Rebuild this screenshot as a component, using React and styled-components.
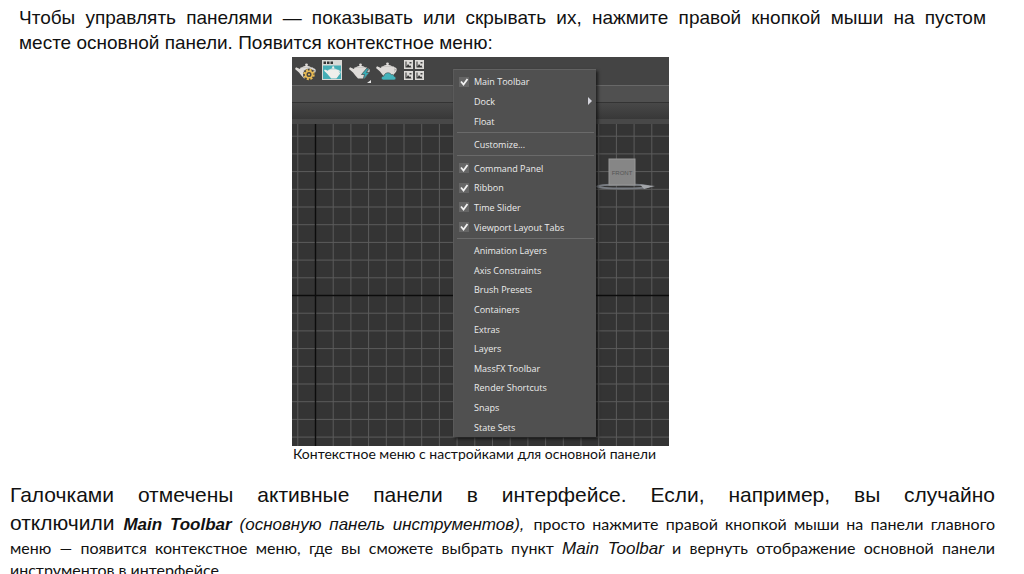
import React from "react";
import styled, { createGlobalStyle } from "styled-components";

const menuGroups = [
  [
    { label: "Main Toolbar", checked: true },
    { label: "Dock", submenu: true },
    { label: "Float" },
  ],
  [{ label: "Customize..." }],
  [
    { label: "Command Panel", checked: true },
    { label: "Ribbon", checked: true },
    { label: "Time Slider", checked: true },
    { label: "Viewport Layout Tabs", checked: true },
  ],
  [
    { label: "Animation Layers" },
    { label: "Axis Constraints" },
    { label: "Brush Presets" },
    { label: "Containers" },
    { label: "Extras" },
    { label: "Layers" },
    { label: "MassFX Toolbar" },
    { label: "Render Shortcuts" },
    { label: "Snaps" },
    { label: "State Sets" },
  ],
];

const Teapot = ({ fill = "#dedbd8" }) => (
  <g fill={fill}>
    <circle cx="11.500" cy="1.800" r="1.400" />
    <path d="M6 4.800Q11.500 .8 17 4.800z" />
    <path d="M5.500 4.600h12.500c1.800 4 .8 8-2.500 10.900H9C7 13.500 5.600 11.500 4 9.600L0 6 1 4.300l4 1.700z" />
    <path d="M17.500 6c3.500-.5 3.500 3.500-.5 6" fill="none" stroke={fill} strokeWidth="1.300" />
  </g>
);

const RenderSetupIcon = () => (
  <svg width="23" height="24" viewBox="0 0 23 24">
    <g transform="translate(0 3)">
      <Teapot />
    </g>
    <circle cx="14" cy="14.500" r="6" fill="#444" />
    <circle
      cx="14"
      cy="14.500"
      r="4.600"
      fill="none"
      stroke="#e8bb55"
      strokeWidth="2.200"
      strokeDasharray="2 1.610"
    />
    <circle cx="14" cy="14.500" r="3.300" fill="none" stroke="#e8bb55" strokeWidth="1.600" />
    <circle cx="14" cy="14.500" r="1.100" fill="#e8bb55" />
  </svg>
);

const RenderWindowIcon = () => (
  <svg width="23" height="24" viewBox="0 0 23 24">
    <rect x="0" y="0" width="20" height="20" fill="#d9d9d6" />
    <path d="M1.500 1.500h2.500v2.500H1.500zM5 1.500h2.500v2.500H5zM8.500 1.500H11v2.500H8.500z" fill="#333" />
    <rect x="1" y="5.500" width="18" height="13.500" fill="#45adb5" />
    <g transform="translate(2 6) scale(.8)">
      <Teapot fill="#f0efec" />
    </g>
  </svg>
);

const RenderIcon = () => (
  <svg width="23" height="24" viewBox="0 0 23 24">
    <g transform="translate(0 3)">
      <Teapot />
    </g>
    <path d="M18 8l-5.500 6.500h3L14 20l6.500-7.500h-3L19.500 9z" fill="#37abb4" stroke="#444" strokeWidth=".7" />
    <path d="M22 20v3h-4z" fill="#e5e5e5" />
  </svg>
);

const RenderCloudIcon = () => (
  <svg width="23" height="24" viewBox="0 0 23 24">
    <g transform="translate(0 2)">
      <Teapot />
    </g>
    <path
      d="M7.500 20c-3-.2-2.600-4 .5-4 .5-3.500 5.500-4.500 7.500-1.200 1.500-.6 2.400 0 2.500 1.500 2.500.3 2.500 3.700 0 3.700z"
      fill="#43b3bb"
      stroke="#444"
      strokeWidth=".6"
    />
  </svg>
);

const GalleryIcon = () => (
  <svg width="23" height="24" viewBox="0 0 23 24">
    {[
      [1, 0],
      [12, 0],
      [1, 11],
      [12, 11],
    ].map(([x, y]) => (
      <g key={`${x}-${y}`} transform={`translate(${x} ${y})`}>
        <rect width="9" height="9" fill="#dcdad7" />
        <path d="M1.500 1.500h1v6h-1zM2 7.500l2-3.500 1.500 2 .8-.8L7.500 7.500z" fill="#333" />
        <path d="M5.500 2h2v1.500h-2z" fill="#444" />
      </g>
    ))}
  </svg>
);

const tools = [
  { name: "Render Setup", Icon: RenderSetupIcon },
  { name: "Rendered Frame Window", Icon: RenderWindowIcon },
  { name: "Render Production", Icon: RenderIcon },
  { name: "Render in the Cloud", Icon: RenderCloudIcon },
  { name: "Render Gallery", Icon: GalleryIcon },
];

// grid step of the viewport; the world axes cross at 23 / 171
const STEP = 17.7;
const columns = Array.from({ length: 22 }, (_, i) => i - 1);
const rows = Array.from({ length: 18 }, (_, i) => i - 9);

const Viewport = () => (
  <ViewportSvg viewBox="0 0 377 322" aria-label="Viewport">
    <rect width="377" height="322" fill="#343434" />
    <g stroke="#5c5c5c" strokeWidth="1">
      {columns.map((i) => (
        <line key={i} x1={23.5 + i * STEP} x2={23.5 + i * STEP} y1="0" y2="322" />
      ))}
      {rows.map((i) => (
        <line key={i} y1={171.5 + i * STEP} y2={171.5 + i * STEP} x1="0" x2="377" />
      ))}
    </g>
    <path d="M23.500 0V322M0 171.500H377" stroke="#0c0c0c" strokeWidth="1.400" />
    <ellipse cx="331" cy="62.500" rx="26" ry="2" fill="none" stroke="#777b81" strokeWidth="1.800" />
    <path d="M348 60.500l15 1.500-11 3z" fill="#a4a6aa" />
    <rect x="317" y="35" width="26" height="26" fill="#868686" stroke="#989898" />
    <text
      x="330"
      y="51"
      fontSize="6"
      fontFamily="Liberation Sans, sans-serif"
      textAnchor="middle"
      fill="#555"
    >
      FRONT
    </text>
  </ViewportSvg>
);

const MenuItem = ({ item }) => {
  if (item.checked) {
    return (
      <CheckLabel>
        <Check type="checkbox" defaultChecked />
        {item.label}
      </CheckLabel>
    );
  }
  return (
    <MenuButton type="button">
      {item.label}
      {item.submenu && (
        <Arrow width="4" height="8" viewBox="0 0 4 8">
          <path d="M0 0l4 4-4 4z" fill="#d4d4dc" />
        </Arrow>
      )}
    </MenuButton>
  );
};

const App = () => {
  return (
    <Page>
      <GlobalStyle />
      <Intro>
        <Line>
          Чтобы управлять панелями — показывать или скрывать их, нажмите правой
          кнопкой мыши на пустом
        </Line>
        <LastLine>месте основной панели. Появится контекстное меню:</LastLine>
      </Intro>
      <FigureRow>
        <Figure>
          <Screen>
            <Toolbar>
              {tools.map(({ name, Icon }) => (
                <Tool key={name} type="button" aria-label={name}>
                  <Icon />
                </Tool>
              ))}
            </Toolbar>
            <Ribbon />
            <RibbonTabs />
            <Viewport />
            <Menu>
              {menuGroups.map((group, index) => (
                <React.Fragment key={index}>
                  {index > 0 && <Separator />}
                  {group.map((item) => (
                    <MenuItem key={item.label} item={item} />
                  ))}
                </React.Fragment>
              ))}
            </Menu>
          </Screen>
          <Caption>Контекстное меню с настройками для основной панели</Caption>
        </Figure>
      </FigureRow>
      <Notes>
        <BigLine>
          Галочками отмечены активные панели в интерфейсе. Если, например, вы
          случайно
        </BigLine>
        <BigLine>
          отключили{" "}
          <Accent>
            <b>Main Toolbar</b> (основную панель инструментов),
          </Accent>{" "}
          <Small>просто нажмите правой кнопкой мыши на панели главного</Small>
        </BigLine>
        <SmallLine>
          меню — появится контекстное меню, где вы сможете выбрать пункт{" "}
          <Accent>Main Toolbar</Accent> и вернуть отображение основной панели
        </SmallLine>
        <SmallLast>инструментов в интерфейсе.</SmallLast>
      </Notes>
    </Page>
  );
};

export default App;

const GlobalStyle = createGlobalStyle`
  * {
    box-sizing: border-box;
  }
  body {
    margin: 0;
    background: #fff;
    color: #111;
    overflow: hidden;
  }
`;

const Page = styled.main`
  height: 100vh;
  overflow: hidden;
  font-family: "Liberation Sans", Arial, sans-serif;
`;

const Intro = styled.section`
  padding: 5px 38px 2px 19px;
  font-size: 19px;
  line-height: 25px;
`;

const Line = styled.div`
  text-align: justify;
  text-align-last: justify;
`;

const LastLine = styled.div`
  text-align: left;
`;

const FigureRow = styled.div`
  display: grid;
  grid-template-columns: 292fr 377px 355fr;
`;

const Figure = styled.figure`
  grid-column: 2;
  margin: 0;
`;

const Screen = styled.div`
  position: relative;
  background: #444;
`;

const Toolbar = styled.div`
  display: flex;
  gap: 4px;
  height: 28px;
  padding: 3px 3px 0;
`;

const Tool = styled.button`
  width: 23px;
  height: 24px;
  padding: 0;
  border: 0;
  background: none;
  svg {
    display: block;
  }
`;

const Ribbon = styled.div`
  height: 18px;
  border-top: 1px solid #686868;
  border-bottom: 1px solid #333;
  background: #505050;
`;

const RibbonTabs = styled.div`
  height: 21px;
  border-bottom: 5px solid #484848;
  background: linear-gradient(#484848, #383838);
`;

const ViewportSvg = styled.svg`
  display: block;
  width: 100%;
`;

const Menu = styled.div`
  position: absolute;
  top: 12px;
  left: 161px;
  width: 143px;
  height: 368px;
  padding-top: 2px;
  display: flex;
  flex-direction: column;
  background: #505050;
  border-top: 1px solid #626262;
  border-left: 1px solid #5a5a5a;
  box-shadow: 2px 2px 3px rgba(0, 0, 0, 0.6);
  font-family: "Open Sans", Tahoma, sans-serif;
  font-size: 9px;
  color: #ececec;
`;

const MenuButton = styled.button`
  flex: 1;
  min-height: 0;
  display: flex;
  align-items: center;
  justify-content: space-between;
  padding: 0 4px 0 20px;
  border: 0;
  background: none;
  color: inherit;
  font: inherit;
  text-align: left;
`;

const CheckLabel = styled.label`
  flex: 1;
  min-height: 0;
  display: flex;
  align-items: center;
  gap: 5px;
  padding-left: 5px;
`;

const Check = styled.input`
  appearance: none;
  width: 10px;
  height: 10px;
  margin: 0;
  background: #666;
  &:checked {
    background: #666
      url("data:image/svg+xml,%3Csvg xmlns='http://www.w3.org/2000/svg' viewBox='0 0 10 10'%3E%3Cpath d='M2 4.500l2.500 3L8.500 2' fill='none' stroke='%23f2f2f2' stroke-width='1.800'/%3E%3C/svg%3E")
      center / 10px;
  }
`;

const Arrow = styled.svg`
  flex: none;
`;

const Separator = styled.hr`
  flex: none;
  width: 137px;
  height: 1px;
  margin: 1px auto 2px;
  border: 0;
  background: #6a6a6a;
`;

const Caption = styled.figcaption`
  padding-left: 1px;
  font-family: Lato, Carlito, sans-serif;
  font-size: 14px;
  line-height: 16px;
  white-space: nowrap;
`;

const Notes = styled.section`
  padding: 19px 29px 0 10px;
`;

const BigLine = styled(Line)`
  font-size: 21px;
  line-height: 28px;
`;

const SmallLine = styled(Line)`
  font-family: Lato, Carlito, sans-serif;
  font-size: 16px;
  line-height: 22px;
`;

const SmallLast = styled(LastLine)`
  font-family: Lato, Carlito, sans-serif;
  font-size: 16px;
  line-height: 22px;
`;

const Accent = styled.em`
  font-family: "Liberation Sans", Arial, sans-serif;
  font-size: 17px;
  line-height: 1;
`;

const Small = styled.span`
  font-family: Lato, Carlito, sans-serif;
  font-size: 16px;
  line-height: 1;
`;
